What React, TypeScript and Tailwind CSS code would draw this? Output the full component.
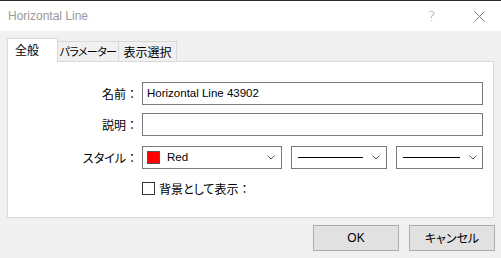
import React from "react";

function Chevron() {
  return (
    <svg width="8" height="5" viewBox="0 0 8 5" className="shrink-0">
      <polyline points="0.5,0.5 4,4 7.5,0.5" fill="none" stroke="#5a5a5a" strokeWidth="1" />
    </svg>
  );
}

export default function App() {
  return (
    <div className="w-[501px] h-[258px] bg-[#f0f0f0] flex flex-col overflow-hidden border-t border-[#2b2b2b] font-['Liberation_Sans','Noto_Sans_CJK_JP',sans-serif] text-[12px] text-black">
      {/* Title bar */}
      <div className="h-[30px] bg-white flex items-center shrink-0">
        <div className="pl-[8px] text-[12px] text-[#999999] flex-1 leading-none">Horizontal Line</div>
        <div className="w-[10px] text-[14px] text-[#9a9a9a] leading-none mr-[36px] font-['DejaVu_Sans',sans-serif] font-light">?</div>
        <svg width="11" height="11" viewBox="0 0 11 11" className="mr-[16px]">
          <line x1="0.5" y1="0.5" x2="10.5" y2="10.5" stroke="#7a7a7a" strokeWidth="1" />
          <line x1="10.5" y1="0.5" x2="0.5" y2="10.5" stroke="#7a7a7a" strokeWidth="1" />
        </svg>
      </div>

      {/* Body */}
      <div className="flex flex-col pl-[7px] pt-[7px]">
        {/* Tabs */}
        <div className="flex items-end h-[23px]">
          <div className="relative z-10 -mb-px w-[51px] h-[24px] bg-white border border-b-0 border-[#d9d9d9] flex items-center pl-[7px] pb-[1px] font-['Noto_Sans_CJK_JP',sans-serif] leading-none whitespace-nowrap">
            全般
          </div>
          <div className="w-[61px] h-[20px] border-t border-r border-[#d9d9d9] flex items-center justify-center font-['Noto_Sans_CJK_JP',sans-serif] [font-feature-settings:'palt'] text-[11px] leading-none tracking-[-0.6px] whitespace-nowrap">
            パラメーター
          </div>
          <div className="w-[58px] h-[20px] border-t border-r border-[#d9d9d9] flex items-center justify-center font-['Noto_Sans_CJK_JP',sans-serif] leading-none whitespace-nowrap">
            表示選択
          </div>
        </div>

        {/* Panel */}
        <div className="w-[487px] h-[157px] bg-white border border-[#d9d9d9] flex flex-col pt-[20px]">
          {/* Row: name */}
          <div className="flex items-center h-[23px]">
            <div className="w-[130px] text-right font-['Noto_Sans_CJK_JP',sans-serif] leading-none whitespace-nowrap">名前：</div>
            <div className="ml-[4px] w-[341px] h-[23px] border border-[#7a7a7a] flex items-center pl-[4px] text-[11.5px] leading-none">
              Horizontal Line 43902
            </div>
          </div>
          {/* Row: description */}
          <div className="flex items-center h-[23px] mt-[8px]">
            <div className="w-[130px] text-right font-['Noto_Sans_CJK_JP',sans-serif] leading-none whitespace-nowrap">説明：</div>
            <div className="ml-[4px] w-[341px] h-[23px] border border-[#7a7a7a]"></div>
          </div>
          {/* Row: style */}
          <div className="flex items-center h-[23px] mt-[10px]">
            <div className="w-[130px] text-right font-['Noto_Sans_CJK_JP',sans-serif] leading-none whitespace-nowrap">
              <span className="[font-feature-settings:'palt']">スタイル</span>：
            </div>
            <div className="ml-[4px] w-[140px] h-[23px] border border-[#7a7a7a] flex items-center pl-[4px] pr-[6px]">
              <div className="w-[13px] h-[13px] bg-[#ff0000] border border-[#555555] shrink-0"></div>
              <div className="ml-[7px] flex-1 text-[11.5px] leading-none">Red</div>
              <Chevron />
            </div>
            <div className="ml-[9px] w-[96px] h-[23px] border border-[#7a7a7a] flex items-center pl-[6px] pr-[6px]">
              <div className="w-[65px] h-px bg-black"></div>
              <div className="flex-1"></div>
              <Chevron />
            </div>
            <div className="ml-[9px] w-[87px] h-[23px] border border-[#7a7a7a] flex items-center pl-[6px] pr-[5px]">
              <div className="w-[57px] h-px bg-black"></div>
              <div className="flex-1"></div>
              <Chevron />
            </div>
          </div>
          {/* Checkbox */}
          <div className="flex items-center mt-[13px] ml-[134px]">
            <div className="w-[13px] h-[13px] border border-[#333333] bg-white shrink-0"></div>
            <div className="ml-[4px] font-['Noto_Sans_CJK_JP',sans-serif] leading-none whitespace-nowrap">
              <span className="[font-feature-settings:'palt']">背景として表示</span>：
            </div>
          </div>
        </div>
      </div>

      {/* Buttons */}
      <div className="flex justify-end gap-[10px] pr-[6px] mt-[7px]">
        <div className="w-[86px] h-[26px] bg-[#e1e1e1] border border-[#adadad] flex items-center justify-center text-[12px] leading-none">
          OK
        </div>
        <div className="w-[86px] h-[26px] bg-[#e1e1e1] border border-[#adadad] flex items-center justify-center font-['Noto_Sans_CJK_JP',sans-serif] [font-feature-settings:'palt'] leading-none whitespace-nowrap">
          キャンセル
        </div>
      </div>
    </div>
  );
}
